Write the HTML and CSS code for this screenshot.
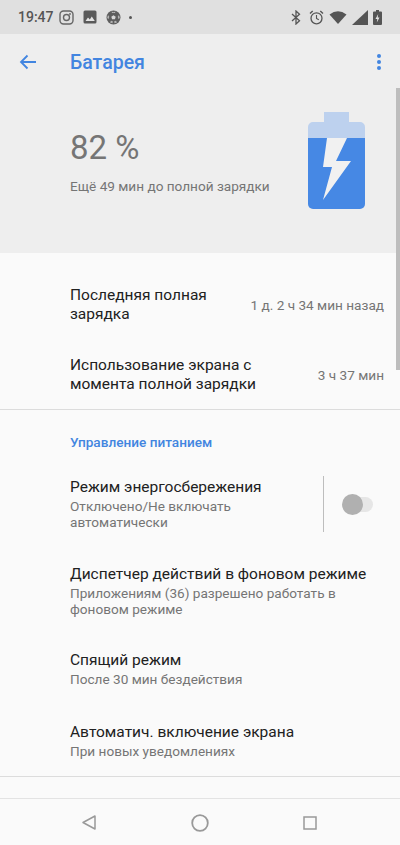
FILE: index.html
```html
<!DOCTYPE html>
<html lang="en">
<head>
    <meta charset="UTF-8">
    <title>Батарея</title>
    <link rel="stylesheet" href="styles.css">
</head>
<body>
    <div class="status">
        <span class="time">19:47</span>
        <svg class="ic" width="15" height="15" viewBox="0 0 15 15"><rect x="1" y="1" width="13" height="13" rx="3.5" fill="none" stroke="#666" stroke-width="1.4"/><circle cx="7.5" cy="7.5" r="3" fill="none" stroke="#666" stroke-width="1.4"/><circle cx="11" cy="4" r=".9" fill="#666"/></svg>
        <svg class="ic gap" width="14" height="14" viewBox="0 0 14 14"><rect x="0.5" y="0.5" width="13" height="13" rx="1.5" fill="#5a5a5a"/><path d="M2.5 11l2.5-3.5 1.8 2 2-3 3 4.500z" fill="#e4e4e4"/></svg>
        <svg class="ic gap" width="15" height="15" viewBox="0 0 15 15"><circle cx="7.500" cy="7.500" r="7" fill="#5e5e5e"/><path d="M7.500 5.200l2.200 1.600-.8 2.500H6.100l-.8-2.500z" fill="#d8d8d8"/><path d="M5.500 1.500l2 .8 2-.8-.5 1.500H6zM1.200 8l.8-3 1.200 1.500-.5 2.500zM13.800 8l-.8-3-1.200 1.500.5 2.500zM4 12.600l1-1.800 1.800.5-.3 1.900zM11 12.600l-1-1.800-1.800.5.300 1.900z" fill="#b4b4b4"/></svg>
        <span class="dot"></span>
        <span class="status-right">
            <svg width="10" height="15" viewBox="0 0 10 15"><path d="M1 4l7.500 6.800L5 14V1l3.500 3.200L1 11" fill="none" stroke="#555" stroke-width="1.300"/></svg>
            <svg class="alarm" width="15" height="15" viewBox="0 0 15 15"><circle cx="7.500" cy="8.300" r="5.500" fill="none" stroke="#555" stroke-width="1.300"/><path d="M7.500 5v3.500l2.300 1.300" fill="none" stroke="#555" stroke-width="1.100"/><path d="M1 3.500L3.700 1M14 3.500L11.300 1" stroke="#555" stroke-width="1.400"/></svg>
            <svg width="18" height="13" viewBox="0 0 18 13"><path d="M0.500 3.500Q9-3 17.500 3.500L9 13z" fill="#555"/></svg>
            <svg width="16" height="15" viewBox="0 0 16 15"><path d="M0 15L16 0v15z" fill="#555"/></svg>
            <svg width="9" height="15" viewBox="0 0 9 15"><path d="M3 0h3v1.500h2a1 1 0 0 1 1 1V14a1 1 0 0 1-1 1H1a1 1 0 0 1-1-1V2.500a1 1 0 0 1 1-1h2z" fill="#555"/><path d="M5.200 4L2.500 9h1.800L3.800 12.500 6.500 7.500H4.700z" fill="#e4e4e4"/></svg>
        </span>
    </div>

    <div class="appbar">
        <svg width="18" height="16" viewBox="0 0 18 16" class="back"><path d="M17 8H2M8.500 1.500L2 8l6.500 6.500" fill="none" stroke="#4285e0" stroke-width="1.800"/></svg>
        <span class="title">Батарея</span>
        <span class="more"><i></i><i></i><i></i></span>
    </div>

    <div class="hero">
        <div class="hero-text">
            <div class="percent">82 %</div>
            <div class="remain">Ещё 49 мин до полной зарядки</div>
        </div>
        <svg class="battery" width="57" height="97" viewBox="0 0 57 97"><path d="M16 0h25v10h11a5 5 0 0 1 5 5v11H0V15a5 5 0 0 1 5-5h11z" fill="#bdd1ee"/><path d="M0 26h57v66a5 5 0 0 1-5 5H5a5 5 0 0 1-5-5z" fill="#4688e4"/><path d="M19 26h20l-11 23h15L15 88l9-33H15z" fill="#f1f1f1"/></svg>
    </div>

    <div class="row first">
        <div class="row-title narrow">Последняя полная зарядка</div>
        <div class="row-value">1 д. 2 ч 34 мин назад</div>
    </div>
    <div class="row second">
        <div class="row-title wide">Использование экрана с момента полной зарядки</div>
        <div class="row-value">3 ч 37 мин</div>
    </div>

    <div class="divider"></div>

    <div class="section">Управление питанием</div>

    <div class="item saver">
        <div class="saver-text">
            <div class="row-title">Режим энергосбережения</div>
            <div class="sub">Отключено/Не включать автоматически</div>
        </div>
        <div class="vline"></div>
        <div class="switch"><span class="knob"></span></div>
    </div>
    <div class="item dispatcher">
        <div class="row-title">Диспетчер действий в фоновом режиме</div>
        <div class="sub">Приложениям (36) разрешено работать в фоновом режиме</div>
    </div>
    <div class="item sleep">
        <div class="row-title">Спящий режим</div>
        <div class="sub">После 30 мин бездействия</div>
    </div>
    <div class="item wake">
        <div class="row-title">Автоматич. включение экрана</div>
        <div class="sub">При новых уведомлениях</div>
    </div>

    <div class="divider end"></div>
    <div class="spacer"></div>

    <div class="nav">
        <svg width="16" height="17" viewBox="0 0 16 17"><path d="M14 2v13L2 8.500z" fill="none" stroke="#999" stroke-width="1.500" stroke-linejoin="round"/></svg>
        <svg width="18" height="18" viewBox="0 0 18 18"><circle cx="9" cy="9" r="7.800" fill="none" stroke="#999" stroke-width="1.800"/></svg>
        <svg width="14" height="14" viewBox="0 0 14 14"><rect x="1" y="1" width="12" height="12" fill="none" stroke="#999" stroke-width="1.500"/></svg>
    </div>

    <div class="scrollbar"></div>
</body>
</html>
```

FILE: styles.css
```css
html, body {
    margin: 0;
    padding: 0;
}

body {
    width: 400px;
    height: 845px;
    overflow: hidden;
    position: relative;
    background-color: #fafafa;
    font-family: Roboto, sans-serif;
    color: #212121;
}

.status {
    height: 34px;
    box-sizing: border-box;
    padding: 0 18px 0 18px;
    display: flex;
    align-items: center;
    background-color: #e0e0e0;
    color: #555;
}

.time {
    font-size: 14px;
    font-weight: 500;
    margin-right: 5px;
}

.ic {
    flex: none;
}

.gap {
    margin-left: 9px;
}

.dot {
    width: 3px;
    height: 3px;
    margin-left: 8px;
    border-radius: 50%;
    background-color: #555;
}

.status-right {
    margin-left: auto;
    display: flex;
    align-items: center;
    gap: 5px;
}

.alarm {
    margin-left: 3px;
}

.appbar {
    height: 54px;
    display: flex;
    align-items: center;
    padding: 2px 19px 0;
    box-sizing: border-box;
    background-color: #eeeeee;
}

.back {
    flex: none;
}

.title {
    margin-left: 33px;
    font-size: 19.5px;
    font-weight: 500;
    color: #4285e0;
}

.more {
    margin-left: auto;
    display: flex;
    flex-direction: column;
    gap: 2px;
}

.more i {
    display: block;
    width: 4px;
    height: 4px;
    border-radius: 50%;
    background-color: #4285e0;
}

.hero {
    height: 165px;
    box-sizing: border-box;
    padding: 24px 35px 0 70px;
    display: flex;
    justify-content: space-between;
    background-color: #eeeeee;
}

.percent {
    margin-top: 16px;
    font-size: 33px;
    line-height: 40px;
    color: #757575;
}

.remain {
    margin-top: 8px;
    font-size: 13.6px;
    line-height: 20px;
    color: #757575;
}

.battery {
    flex: none;
}

.row {
    display: flex;
    justify-content: space-between;
    align-items: center;
    padding: 0 16px 0 70px;
    height: 70px;
}

.first {
    margin-top: 17px;
}

.second {
    height: 69px;
}

.row-title {
    font-size: 15.5px;
    line-height: 19px;
}

.narrow {
    width: 170px;
}

.wide {
    width: 240px;
}

.row-value {
    font-size: 13.6px;
    color: #757575;
    white-space: nowrap;
}

.divider {
    height: 1px;
    background-color: #dcdcdc;
}

.section {
    margin-top: 24px;
    padding-left: 70px;
    font-size: 13.6px;
    line-height: 16px;
    font-weight: 500;
    color: #4285e0;
}

.item {
    padding: 0 16px 0 70px;
}

.sub {
    margin-top: 1px;
    font-size: 13.6px;
    line-height: 16px;
    color: #757575;
}

.saver {
    margin-top: 26px;
    display: flex;
    align-items: center;
    padding-right: 0;
}

.saver-text {
    width: 240px;
}

.vline {
    width: 1px;
    height: 56px;
    margin-left: 13px;
    background-color: #bdbdbd;
}

.switch {
    position: relative;
    width: 28px;
    height: 15px;
    margin-left: 21px;
    border-radius: 8px;
    background-color: #e6e6e6;
}

.knob {
    position: absolute;
    left: -3px;
    top: -3px;
    width: 21px;
    height: 21px;
    border-radius: 50%;
    background-color: #b0b0b0;
}

.dispatcher {
    margin-top: 33px;
}

.sleep {
    margin-top: 34px;
}

.wake {
    margin-top: 36px;
}

.end {
    margin-top: 17px;
}

.spacer {
    height: 21px;
}

.nav {
    height: 48px;
    box-sizing: border-box;
    border-top: 1px solid #e3e3e3;
    display: flex;
    align-items: center;
    justify-content: space-between;
    padding: 0 83px 0 81px;
}

.scrollbar {
    position: absolute;
    right: 0;
    top: 88px;
    width: 4px;
    height: 282px;
    background-color: #bdbdbd;
}
```
